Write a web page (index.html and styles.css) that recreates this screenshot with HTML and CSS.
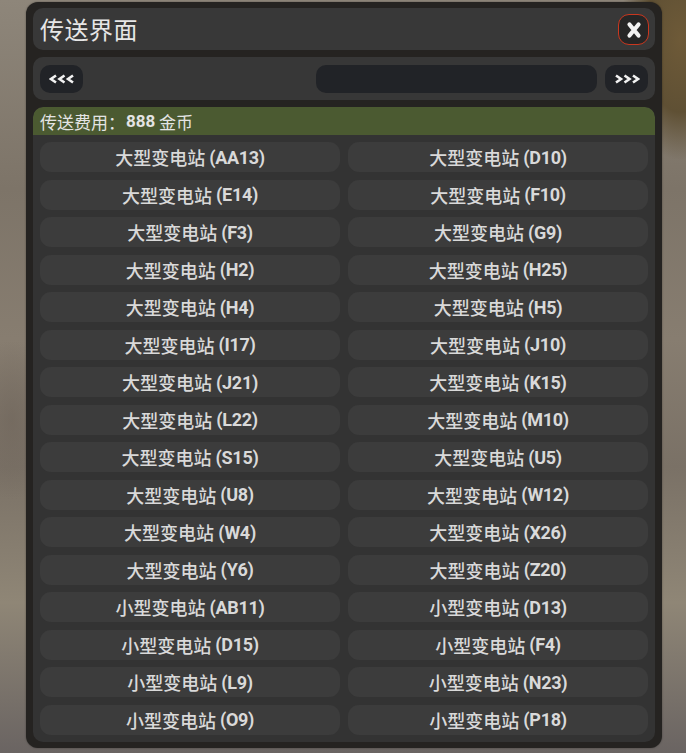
FILE: index.html
```html
<!DOCTYPE html>
<html lang="zh">
<head>
<meta charset="utf-8">
<title>传送界面</title>
<link rel="stylesheet" href="styles.css">
</head>
<body>
<div class="scene">
  <div class="panel">
    <div class="titlebar">
      <h1 class="title">传送界面</h1>
      <button class="close" aria-label="关闭">
        <svg width="16" height="18" viewBox="0 0 16 18"><path d="M3.5 3.5 L12.5 14.5 M12.5 3.5 L3.5 14.5" stroke="#f2f2f2" stroke-width="4.2" stroke-linecap="round"/></svg>
      </button>
    </div>
    <div class="navbar">
      <button class="navbtn" aria-label="&lt;&lt;&lt;">
        <svg width="26" height="10" viewBox="0 0 26 10"><path d="M7 1.5 L2 5 L7 8.5 M15.5 1.5 L10.5 5 L15.5 8.5 M24 1.5 L19 5 L24 8.5" fill="none" stroke="#f2f2f2" stroke-width="2.6" stroke-linejoin="miter" stroke-linecap="butt"/></svg>
      </button>
      <div class="spacer"></div>
      <div class="search"></div>
      <button class="navbtn" aria-label="&gt;&gt;&gt;">
        <svg width="26" height="10" viewBox="0 0 26 10"><path d="M2 1.5 L7 5 L2 8.5 M10.5 1.5 L15.5 5 L10.5 8.5 M19 1.5 L24 5 L19 8.5" fill="none" stroke="#f2f2f2" stroke-width="2.6" stroke-linejoin="miter" stroke-linecap="butt"/></svg>
      </button>
    </div>
    <div class="listbox">
      <div class="cost">传送费用：<b>888</b> 金币</div>
      <div class="grid">
        <div class="item">大型变电站 <b>(AA13)</b></div>
        <div class="item">大型变电站 <b>(D10)</b></div>
        <div class="item">大型变电站 <b>(E14)</b></div>
        <div class="item">大型变电站 <b>(F10)</b></div>
        <div class="item">大型变电站 <b>(F3)</b></div>
        <div class="item">大型变电站 <b>(G9)</b></div>
        <div class="item">大型变电站 <b>(H2)</b></div>
        <div class="item">大型变电站 <b>(H25)</b></div>
        <div class="item">大型变电站 <b>(H4)</b></div>
        <div class="item">大型变电站 <b>(H5)</b></div>
        <div class="item">大型变电站 <b>(I17)</b></div>
        <div class="item">大型变电站 <b>(J10)</b></div>
        <div class="item">大型变电站 <b>(J21)</b></div>
        <div class="item">大型变电站 <b>(K15)</b></div>
        <div class="item">大型变电站 <b>(L22)</b></div>
        <div class="item">大型变电站 <b>(M10)</b></div>
        <div class="item">大型变电站 <b>(S15)</b></div>
        <div class="item">大型变电站 <b>(U5)</b></div>
        <div class="item">大型变电站 <b>(U8)</b></div>
        <div class="item">大型变电站 <b>(W12)</b></div>
        <div class="item">大型变电站 <b>(W4)</b></div>
        <div class="item">大型变电站 <b>(X26)</b></div>
        <div class="item">大型变电站 <b>(Y6)</b></div>
        <div class="item">大型变电站 <b>(Z20)</b></div>
        <div class="item">小型变电站 <b>(AB11)</b></div>
        <div class="item">小型变电站 <b>(D13)</b></div>
        <div class="item">小型变电站 <b>(D15)</b></div>
        <div class="item">小型变电站 <b>(F4)</b></div>
        <div class="item">小型变电站 <b>(L9)</b></div>
        <div class="item">小型变电站 <b>(N23)</b></div>
        <div class="item">小型变电站 <b>(O9)</b></div>
        <div class="item">小型变电站 <b>(P18)</b></div>
      </div>
    </div>
  </div>
</div>
</body>
</html>
```

FILE: styles.css
```css
* { box-sizing: border-box; }

html, body {
  margin: 0;
  height: 100%;
}

body {
  font-family: Roboto, "Noto Sans CJK SC", sans-serif;
  color: #dedede;
  overflow: hidden;
  background:
    radial-gradient(ellipse 60px 120px at 680px 40px, #6e5a38 0%, #5f5034 60%, rgba(95,80,52,0) 100%),
    radial-gradient(ellipse 40px 80px at 12px 420px, rgba(110,100,90,0.6), rgba(110,100,90,0)),
    linear-gradient(180deg, #8e867a 0%, #7d7468 25%, #877d70 45%, #7a7166 62%, #8f8676 80%, #6a6462 100%);
}

.scene {
  padding: 2px 0 0 26px;
}

/* outer window frame */
.panel {
  width: 636px;
  height: 746px;
  padding: 6px 7px 6px 7px;
  background: #252321;
  border-radius: 12px;
  display: flex;
  flex-direction: column;
  gap: 7px;
  box-shadow: 0 0 2px rgba(0,0,0,0.4);
}

/* title bar */
.titlebar {
  height: 42px;
  background: #383838;
  border-radius: 10px;
  display: flex;
  align-items: center;
  justify-content: space-between;
  padding: 0 6px 0 7px;
}

.title {
  margin: 0;
  font-family: "Noto Sans CJK SC", sans-serif;
  font-weight: 400;
  font-size: 24px;
  line-height: 1;
  color: #e6e6e6;
  letter-spacing: 0.5px;
}

.close {
  width: 31px;
  height: 31px;
  border: 1.5px solid #c9371f;
  border-radius: 11px;
  background: #262626;
  display: flex;
  align-items: center;
  justify-content: center;
  padding: 0;
  margin-top: 1px;
}

/* pager row */
.navbar {
  height: 43px;
  background: #373737;
  border-radius: 10px;
  display: flex;
  align-items: center;
  gap: 8px;
  padding: 1px 7px 0 7px;
}

.navbtn {
  width: 43px;
  height: 28px;
  border: 0;
  border-radius: 10px;
  background: #212327;
  display: flex;
  align-items: center;
  justify-content: center;
  padding: 0;
}

.spacer { flex: 1; }

.search {
  width: 281px;
  height: 28px;
  border-radius: 10px;
  background: #212327;
}

/* destination list */
.listbox {
  flex: 1;
  background: #333333;
  border-radius: 10px;
  overflow: hidden;
  display: flex;
  flex-direction: column;
}

.cost {
  height: 28px;
  background: #4b5a31;
  border-radius: 10px 10px 0 0;
  padding: 0 7px;
  display: flex;
  align-items: center;
  font-family: "Noto Sans CJK SC", sans-serif;
  font-size: 17px;
  color: #e4e4e4;
  white-space: pre;
}

.cost b {
  font-family: Roboto, sans-serif;
  font-weight: 700;
  font-size: 17px;
  margin-left: 1px;
}

.grid {
  display: grid;
  grid-template-columns: 300px 300px;
  grid-auto-rows: 30px;
  column-gap: 8px;
  row-gap: 7.5px;
  padding: 7px 7px;
}

.item {
  background: #3c3c3c;
  border-radius: 11px;
  display: flex;
  align-items: center;
  justify-content: center;
  font-family: "Noto Sans CJK SC", sans-serif;
  font-weight: 500;
  font-size: 18px;
  color: #d9d9d9;
  white-space: pre;
}

.item b {
  font-family: Roboto, sans-serif;
  font-weight: 700;
  font-size: 18px;
  letter-spacing: -0.3px;
}
```
